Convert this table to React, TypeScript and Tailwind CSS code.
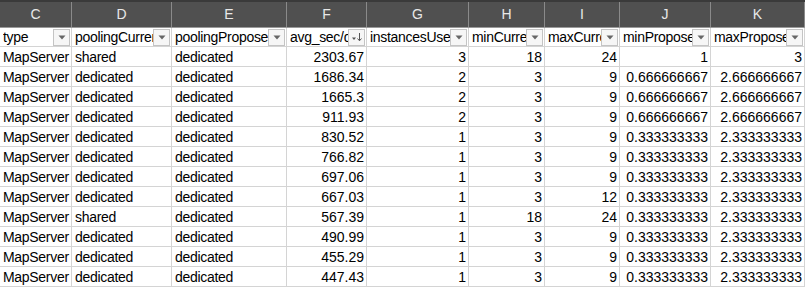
import React from "react";

const cols = [
  { letter: "C", head: "type" },
  { letter: "D", head: "poolingCurrent" },
  { letter: "E", head: "poolingProposed" },
  { letter: "F", head: "avg_sec/day", sort: true },
  { letter: "G", head: "instancesUsed" },
  { letter: "H", head: "minCurrent" },
  { letter: "I", head: "maxCurrent" },
  { letter: "J", head: "minProposed" },
  { letter: "K", head: "maxProposed" },
];

const two = ["0.666666667", "2.666666667"];
const one = ["0.333333333", "2.333333333"];

const rows: string[][] = [
  ["MapServer", "shared", "dedicated", "2303.67", "3", "18", "24", "1", "3"],
  ["MapServer", "dedicated", "dedicated", "1686.34", "2", "3", "9", ...two],
  ["MapServer", "dedicated", "dedicated", "1665.3", "2", "3", "9", ...two],
  ["MapServer", "dedicated", "dedicated", "911.93", "2", "3", "9", ...two],
  ["MapServer", "dedicated", "dedicated", "830.52", "1", "3", "9", ...one],
  ["MapServer", "dedicated", "dedicated", "766.82", "1", "3", "9", ...one],
  ["MapServer", "dedicated", "dedicated", "697.06", "1", "3", "9", ...one],
  ["MapServer", "dedicated", "dedicated", "667.03", "1", "3", "12", ...one],
  ["MapServer", "shared", "dedicated", "567.39", "1", "18", "24", ...one],
  ["MapServer", "dedicated", "dedicated", "490.99", "1", "3", "9", ...one],
  ["MapServer", "dedicated", "dedicated", "455.29", "1", "3", "9", ...one],
  ["MapServer", "dedicated", "dedicated", "447.43", "1", "3", "9", ...one],
];

function FilterBtn({ sort }: { sort?: boolean }) {
  return (
    <div className="w-[17px] h-[17px] border border-[#c4c4c4] bg-[#f6f6f6] flex items-center justify-center shrink-0 mr-[1px]">
      {sort ? (
        <svg width="12" height="10" viewBox="0 0 12 10">
          <path d="M1 5.5 L5 5.5 L3 8 Z" fill="#555" />
          <path d="M8.5 1 V8.5" stroke="#555" strokeWidth="1" />
          <path d="M6.5 6.5 L8.5 8.8 L10.5 6.5" stroke="#555" strokeWidth="1" fill="none" />
        </svg>
      ) : (
        <svg width="8" height="5" viewBox="0 0 8 5">
          <path d="M0.5 0.5 L7.5 0.5 L4 4.5 Z" fill="#666" />
        </svg>
      )}
    </div>
  );
}

export default function App() {
  const gridCols = "grid grid-cols-[72px_100px_115px_80px_102px_76px_75px_91px_94px]";
  return (
    <div
      className="w-[805px] h-[288px] overflow-hidden bg-white text-black"
      style={{ fontFamily: "'Liberation Sans', Arial, sans-serif" }}
    >
      <div className="h-[2px] bg-[#3a3a3a]" />
      <div className={`${gridCols} h-[25px] bg-[#505050]`}>
        {cols.map((c) => (
          <div
            key={c.letter}
            className="border-r border-[#8a8a8a] flex items-center justify-center text-[14px] text-[#e8e8e8]"
          >
            {c.letter}
          </div>
        ))}
      </div>
      <div className={`${gridCols} h-[20px] border-t border-[#9a9a9a]`}>
        {cols.map((c) => (
          <div
            key={c.letter}
            className="border-r border-b border-[#d4d4d4] flex items-center pl-[3px] text-[14px] tracking-[-0.3px] overflow-hidden"
          >
            <span className="flex-1 overflow-hidden whitespace-nowrap leading-[19px] pt-[1px]">{c.head}</span>
            <FilterBtn sort={c.sort} />
          </div>
        ))}
      </div>
      {rows.map((r, i) => (
        <div key={i} className={`${gridCols} h-[20px]`}>
          {r.map((v, j) => (
            <div
              key={j}
              className={`border-r border-b border-[#d4d4d4] text-[14px] leading-[19px] pt-[1px] whitespace-nowrap overflow-hidden ${
                j < 3 ? "pl-[3px] text-left tracking-[-0.3px]" : "pr-[2px] text-right"
              }`}
            >
              {v}
            </div>
          ))}
        </div>
      ))}
    </div>
  );
}
